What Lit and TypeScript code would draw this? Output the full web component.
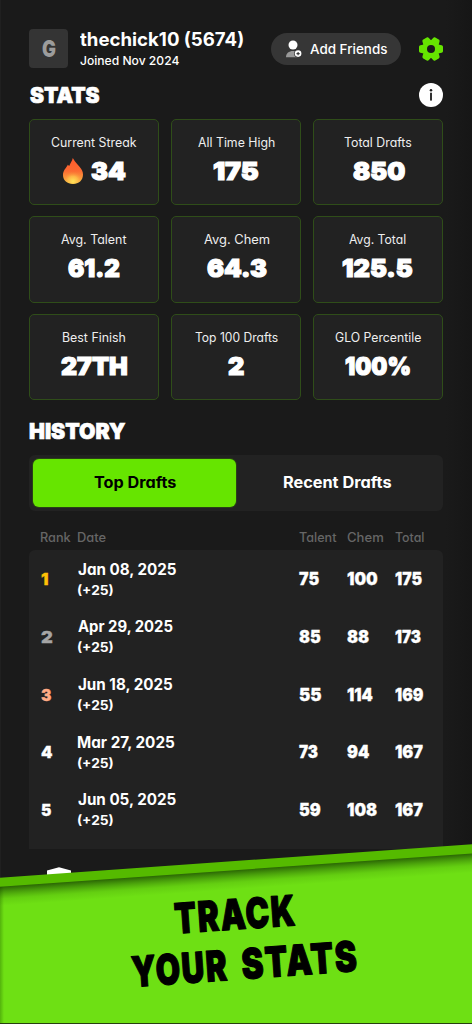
import { LitElement, html, css, svg } from "lit";
import { customElement, property, query } from "lit/decorators.js";
import { classMap } from "lit/directives/class-map.js";

const FAMILY = 'Inter, "Open Sans", sans-serif';

/** One line of text whose ink is fitted to a given width. */
@customElement("fit-text")
class FitText extends LitElement {
  static styles = css`
    :host {
      display: block;
      white-space: nowrap;
      text-align: left;
      flex: none;
    }
    .line {
      display: inline-block;
      transform-origin: 0 50%;
    }
  `;

  @property() text = "";
  @property({ type: Number }) w = 0;
  @query(".line") line!: HTMLElement;

  updated() {
    const style = getComputedStyle(this.line);
    const ctx = document.createElement("canvas").getContext("2d")!;
    ctx.font = `${style.fontWeight} ${style.fontSize} ${FAMILY}`;
    const m = ctx.measureText(this.text);
    const left = -m.actualBoundingBoxLeft;
    const right = m.width - m.actualBoundingBoxRight;
    const natural = this.line.offsetWidth - left - right;
    const scale = this.w / natural;
    this.style.width = `${this.w}px`;
    this.line.style.transform = `translateX(${-left * scale}px) scaleX(${scale})`;
  }

  render() {
    return html`<span class="line">${this.text}</span>`;
  }
}

interface Stat { label: string; lw: number; value: string; vw: number; fire?: boolean }
const STATS: Stat[] = [
  { label: "Current Streak", lw: 86, value: "34", vw: 34, fire: true },
  { label: "All Time High", lw: 76.5, value: "175", vw: 44.5 },
  { label: "Total Drafts", lw: 67.5, value: "850", vw: 51 },
  { label: "Avg. Talent", lw: 65.5, value: "61.2", vw: 52 },
  { label: "Avg. Chem", lw: 65, value: "64.3", vw: 59 },
  { label: "Avg. Total", lw: 57.5, value: "125.5", vw: 69.5 },
  { label: "Best Finish", lw: 62, value: "27TH", vw: 66 },
  { label: "Top 100 Drafts", lw: 82.5, value: "2", vw: 16 },
  { label: "GLO Percentile", lw: 86, value: "100%", vw: 64 },
];

type Cell = [string, number];
const DRAFTS: { rank: Cell; date: Cell; scores: Cell[] }[] = [
  { rank: ["1", 7], date: ["Jan 08, 2025", 98.5], scores: [["75", 20.5], ["100", 30.5], ["175", 27.5]] },
  { rank: ["2", 11], date: ["Apr 29, 2025", 95.5], scores: [["85", 22.5], ["88", 22.5], ["173", 26.5]] },
  { rank: ["3", 11], date: ["Jun 18, 2025", 94.5], scores: [["55", 22.5], ["114", 25.5], ["169", 29]] },
  { rank: ["4", 11], date: ["Mar 27, 2025", 97], scores: [["73", 19.5], ["94", 22], ["167", 27.5]] },
  { rank: ["5", 11], date: ["Jun 05, 2025", 98.5], scores: [["59", 21.5], ["108", 30], ["167", 27.5]] },
];

const t = (cls: string, text: string, w: number) =>
  html`<fit-text class=${cls} .text=${text} .w=${w}></fit-text>`;

const flame = html`<svg class="flame" viewBox="0 0 20 26">
  <defs>
    <linearGradient id="fl" x1="0" y1="0" x2="0" y2="1">
      <stop offset="0" stop-color="#ff5a2c" />
      <stop offset=".5" stop-color="#fb6b32" />
      <stop offset=".8" stop-color="#f9a03c" />
      <stop offset="1" stop-color="#fbd04c" />
    </linearGradient>
    <radialGradient id="core" cx=".5" cy=".85" r=".7">
      <stop offset="0" stop-color="#ffe45a" />
      <stop offset=".5" stop-color="#fdb545" />
      <stop offset="1" stop-color="#fb7435" stop-opacity="0" />
    </radialGradient>
  </defs>
  <path fill="url(#fl)" d="M9.800 0C9.200 3.400 7 5.500 6.200 8L4.800 6.800C3.800 9.600 0 12 0 17C0 22.500 4.300 26 10 26C15.800 26 20 22.300 20 16.500C20 10 14.800 8.500 9.800 0Z" />
  <ellipse cx="10" cy="18.300" rx="8" ry="7.200" fill="url(#core)" />
</svg>`;

const addPerson = html`<svg class="person" viewBox="0 0 16 18">
  <circle cx="7" cy="5" r="4.500" fill="#fff" />
  <path fill="#999" d="M0 17.300C0 13.200 3 11 7 11C9 11 10.600 11.400 11.700 12.300V17.300Z" />
  <circle cx="12.100" cy="13.600" r="4" fill="#363636" />
  <circle cx="12.100" cy="13.600" r="3.300" fill="#fff" />
  <path d="M12.100 12V15.200M10.500 13.600H13.700" stroke="#363636" stroke-width="1.100" />
</svg>`;

const gear = html`<svg class="gear" viewBox="-12 -12 24 24">
  <g fill="#66e500">
    ${[0, 60, 120, 180, 240, 300].map((a) => svg`<path d="M6 -4.800L10.600 -3.700C11.600 -3.400 12 -2.800 12 -2V2C12 2.800 11.600 3.400 10.600 3.700L6 4.800Z" transform="rotate(${a})" />`)}
    <circle r="8.700" />
  </g>
  <circle r="4" fill="#1a1a1a" />
</svg>`;

const info = html`<svg class="gear" viewBox="0 0 24 24">
  <circle cx="12" cy="12" r="12" fill="#fff" />
  <circle cx="12" cy="7.200" r="1.250" fill="#1a1a1a" />
  <rect x="11.100" y="9.700" width="1.800" height="7.900" fill="#1a1a1a" />
</svg>`;

@customElement("app-root")
class AppRoot extends LitElement {
  static styles = css`
    :host {
      display: block;
      position: relative;
      width: 472px;
      height: 1024px;
      overflow: hidden;
      background: linear-gradient(90deg, #202020 0 1px, #1a1a1a 1px 446px, #161616 472px);
      color: #fff;
      font-family: Inter, "Open Sans", sans-serif;
      font-feature-settings: "cv11";
    }
    svg { display: block; flex: none; }
    .page { padding: 29px 29px 0; }
    .row { display: flex; align-items: center; }
    .header { display: flex; align-items: flex-start; height: 39px; }
    .avatar {
      display: grid;
      place-items: center;
      width: 39px;
      height: 39px;
      border-radius: 4px;
      background: #343434;
      color: #9c9c9c;
    }
    .glyph { font-size: 22.5px; font-weight: 900; line-height: 39px; }
    .who { margin-left: 12px; flex: 1; }
    .name { font-size: 18.5px; font-weight: 700; line-height: 21px; }
    .joined { font-size: 12px; font-weight: 500; line-height: 22px; }
    .pill {
      display: flex;
      align-items: center;
      height: 32px;
      width: 130px;
      margin-top: 4px;
      box-sizing: border-box;
      padding-left: 15px;
      border-radius: 16px;
      background: #363636;
      gap: 7.5px;
    }
    .pilltext { font-size: 13px; font-weight: 500; line-height: 32px; }
    .person { width: 16px; height: 18px; }
    .gear { width: 24px; height: 24px; }
    .settings { margin: 8px 0 0 18px; }
    .heading {
      font-size: 21.5px;
      font-weight: 900;
      line-height: 23px;
      padding-left: 1px;
      -webkit-text-stroke: 0.7px #fff;
    }
    .title { justify-content: space-between; margin-top: 15px; height: 24px; }
    .grid {
      display: grid;
      grid-template-columns: repeat(3, 130px);
      grid-auto-rows: 86.5px;
      gap: 11px 12px;
      margin-top: 11.5px;
    }
    .card {
      display: flex;
      flex-direction: column;
      align-items: center;
      box-sizing: border-box;
      padding-top: 15px;
      gap: 7.500px;
      border: 1px solid #2f4d19;
      border-radius: 5px;
      background: #222;
    }
    .label { font-size: 12.5px; line-height: 16px; color: #eee; }
    .figure { display: flex; align-items: center; gap: 8px; height: 26px; }
    .value {
      font-size: 25px;
      font-weight: 900;
      line-height: 27px;
      -webkit-text-stroke: 1.2px #fff;
    }
    .flame { width: 20px; height: 26px; }
    .history { margin-top: 20px; height: 22.5px; }
    .tabs {
      display: flex;
      box-sizing: border-box;
      height: 56px;
      margin-top: 12.5px;
      padding: 4px;
      border-radius: 6px;
      background: #222;
    }
    .tab {
      flex: 1;
      display: grid;
      place-items: center;
      border-radius: 6px;
    }
    .active { background: #66e500; color: #000; box-shadow: 0 0 0 1px #294016; }
    .tabtext { font-size: 15.3px; font-weight: 700; line-height: 48px; }
    .cols {
      display: grid;
      grid-template-columns: 36.5px 221.500px 48px 48px 48px;
      padding-left: 12px;
    }
    .head { margin-top: 18px; height: 21px; }
    .th { font-size: 12.5px; font-weight: 500; line-height: 17px; color: #666; }
    .table {
      height: 299px;
      box-sizing: border-box;
      padding-top: 0.5px;
      border-radius: 6px 6px 0 0;
      background: #222;
    }
    .draft { height: 57.7px; align-items: center; }
    .when { align-self: start; padding-top: 9px; }
    .date { font-size: 15.3px; font-weight: 700; line-height: 20px; }
    .bonus { font-size: 13px; font-weight: 700; line-height: 21px; }
    .score { font-size: 17.5px; font-weight: 900; line-height: 20px; -webkit-text-stroke: 0.3px #fff; }
    .rank { font-size: 16px; font-weight: 900; line-height: 20px; -webkit-text-stroke: 0.3px currentColor; }
    .gold { color: #ffc107; }
    .silver { color: #a5a5a5; }
    .bronze { color: #ffab85; }
    .shield { width: 24px; height: 16px; margin: 18px 0 0 18px; }
    .banner { position: absolute; left: 0; bottom: 0; width: 472px; height: 184px; }
    .slogan {
      font: 900 42px Inter, "Open Sans", sans-serif;
      letter-spacing: 2px;
      stroke: #000;
      stroke-width: 1.2;
      stroke-linejoin: round;
    }
  `;

  render() {
    const medals = ["gold", "silver", "bronze"];
    return html`
      <div class="page">
        <div class="header">
          <div class="avatar">${t("glyph", "G", 14)}</div>
          <div class="who">
            ${t("name", "thechick10 (5674)", 163)}
            ${t("joined", "Joined Nov 2024", 99)}
          </div>
          <div class="pill">${addPerson}${t("pilltext", "Add Friends", 77.5)}</div>
          <div class="settings">${gear}</div>
        </div>
        <div class="row title">${t("heading", "STATS", 69)}${info}</div>
        <div class="grid">
          ${STATS.map((s) => html`<div class="card">
            ${t("label", s.label, s.lw)}
            <div class="figure">${s.fire ? flame : ""}${t("value", s.value, s.vw)}</div>
          </div>`)}
        </div>
        <div class="history">${t("heading", "HISTORY", 96)}</div>
        <div class="tabs">
          <div class="tab active">${t("tabtext", "Top Drafts", 82)}</div>
          <div class="tab">${t("tabtext", "Recent Drafts", 107)}</div>
        </div>
        <div class="cols head">
          ${t("th", "Rank", 29.500)}${t("th", "Date", 27.500)}${t("th", "Talent", 37)}${t("th", "Chem", 36.500)}${t("th", "Total", 29.500)}
        </div>
        <div class="table">
          ${DRAFTS.map((d, i) => html`<div class="cols draft">
            <div class=${classMap({ [medals[i] ?? "plain"]: true })}>${t("rank", ...d.rank)}</div>
            <div class="when">${t("date", ...d.date)}${t("bonus", "(+25)", 35)}</div>
            ${d.scores.map((s) => t("score", ...s))}
          </div>`)}
        </div>
        <svg class="shield" viewBox="0 0 24 16"><path fill="#fff" d="M0 3.500L12 .3L24 3.500V16H0Z" /></svg>
      </div>
      <svg class="banner" viewBox="0 840 472 184">
        <defs>
          <linearGradient id="shade" x1="0" y1="0" x2="0" y2="1">
            <stop offset="0" stop-color="#143c00" stop-opacity=".8" />
            <stop offset=".3" stop-color="#1c5000" stop-opacity=".48" />
            <stop offset=".65" stop-color="#2c7000" stop-opacity=".15" />
            <stop offset="1" stop-color="#2c7000" stop-opacity="0" />
          </linearGradient>
          <linearGradient id="edge">
            <stop offset="0" stop-color="#2c7000" stop-opacity=".4" />
            <stop offset="1" stop-color="#2c7000" stop-opacity="0" />
          </linearGradient>
        </defs>
        <path fill="#6ee014" d="M0 880L472 847V1023H0Z" />
        <rect y="886" width="4" height="137" fill="url(#edge)" />
        <rect x="-3" y="886" width="480" height="20" fill="url(#shade)" transform="rotate(-4.050 0 886)" />
        <path fill="#55ba00" d="M0 877.700L472 844.300V853.500L0 886.700Z" />
        <rect y="1023" width="472" height="1" fill="#26400f" />
        <text class="slogan" x="175.500" y="933.700" textLength="122" lengthAdjust="spacingAndGlyphs" transform="rotate(-4.050 175.500 933.700)">TRACK</text>
        <text class="slogan" x="132.500" y="987" textLength="97" lengthAdjust="spacingAndGlyphs" transform="rotate(-4.050 132.500 987)">YOUR</text>
        <text class="slogan" x="242.500" y="979.200" textLength="117" lengthAdjust="spacingAndGlyphs" transform="rotate(-4.050 242.500 979.200)">STATS</text>
      </svg>
    `;
  }
}
